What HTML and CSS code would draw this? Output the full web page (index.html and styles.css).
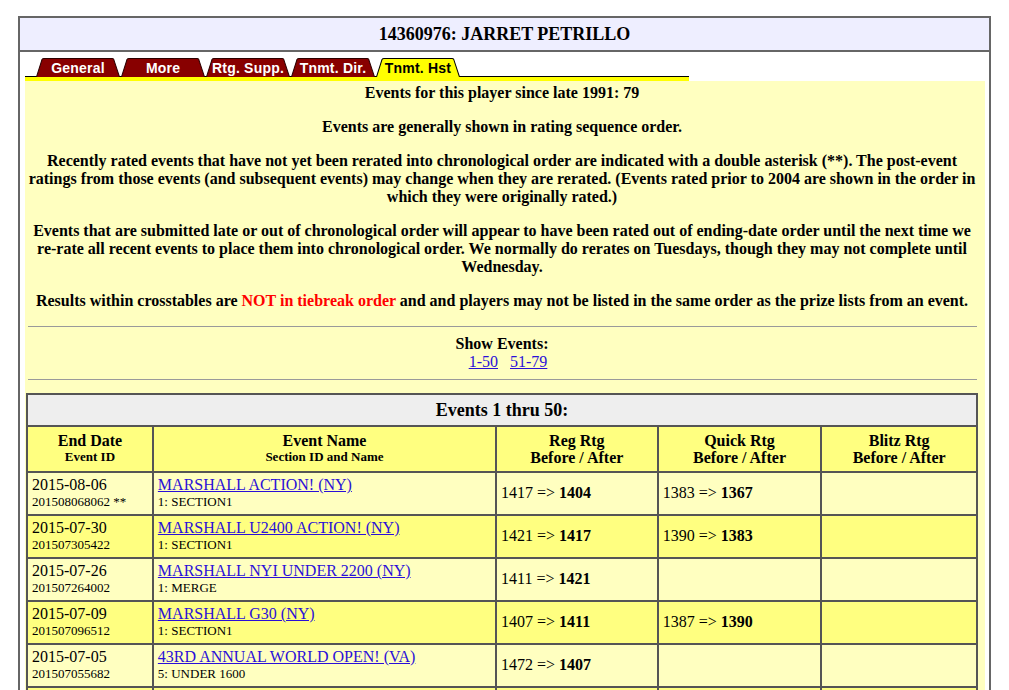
FILE: index.html
```html
<!DOCTYPE html>
<html>
<head>
<meta charset="utf-8">
<title>14360976: JARRET PETRILLO</title>
<link rel="stylesheet" href="styles.css">
</head>
<body>
<div class="page">
  <div class="title">14360976: JARRET PETRILLO</div>
  <div class="main">
    <div class="tabstrip">
      <div class="tabs">
        <a class="tab" href="#"><svg class="tab-bg" viewBox="0 0 84 18" preserveAspectRatio="none"><path d="M0.5 18 L6 1.5 Q6.6 0.5 8 0.5 L76 0.5 Q77.3 0.5 77.8 1.5 L83.5 18" /></svg><span>General</span></a>
        <a class="tab" href="#"><svg class="tab-bg" viewBox="0 0 84 18" preserveAspectRatio="none"><path d="M0.5 18 L6 1.5 Q6.6 0.5 8 0.5 L76 0.5 Q77.3 0.5 77.8 1.5 L83.5 18" /></svg><span>More</span></a>
        <a class="tab" href="#"><svg class="tab-bg" viewBox="0 0 84 18" preserveAspectRatio="none"><path d="M0.5 18 L6 1.5 Q6.6 0.5 8 0.5 L76 0.5 Q77.3 0.5 77.8 1.5 L83.5 18" /></svg><span>Rtg. Supp.</span></a>
        <a class="tab" href="#"><svg class="tab-bg" viewBox="0 0 84 18" preserveAspectRatio="none"><path d="M0.5 18 L6 1.5 Q6.6 0.5 8 0.5 L76 0.5 Q77.3 0.5 77.8 1.5 L83.5 18" /></svg><span>Tnmt. Dir.</span></a>
        <a class="tab active" href="#"><svg class="tab-bg" viewBox="0 0 84 18" preserveAspectRatio="none"><path d="M0.5 18 L6 1.5 Q6.6 0.5 8 0.5 L76 0.5 Q77.3 0.5 77.8 1.5 L83.5 18" /></svg><span>Tnmt. Hst</span></a>
      </div>
    </div>
    <div class="panel">
      <p>Events for this player since late 1991: 79</p>
      <p>Events are generally shown in rating sequence order.</p>
      <p>Recently rated events that have not yet been rerated into chronological order are indicated with a double asterisk (**). The post-event ratings from those events (and subsequent events) may change when they are rerated. (Events rated prior to 2004 are shown in the order in which they were originally rated.)</p>
      <p>Events that are submitted late or out of chronological order will appear to have been rated out of ending-date order until the next time we re-rate all recent events to place them into chronological order. We normally do rerates on Tuesdays, though they may not complete until Wednesday.</p>
      <p>Results within crosstables are <span class="red">NOT in tiebreak order</span> and and players may not be listed in the same order as the prize lists from an event.</p>
      <div class="rule"></div>
      <div class="show">
        <div class="show-label">Show Events:</div>
        <div class="pages">&nbsp;&nbsp;&nbsp;<a href="#">1-50</a>&nbsp;&nbsp; <a href="#">51-79</a></div>
      </div>
      <div class="rule"></div>
      <table class="events">
        <tr><td class="caption" colspan="5">Events 1 thru 50:</td></tr>
        <tr class="head">
          <td class="c1">End Date<span class="sub">Event ID</span></td>
          <td class="c2">Event Name<span class="sub">Section ID and Name</span></td>
          <td class="c3">Reg Rtg<br>Before / After</td>
          <td class="c4">Quick Rtg<br>Before / After</td>
          <td class="c5">Blitz Rtg<br>Before / After</td>
        </tr>
        <tr class="light">
          <td>2015-08-06<span class="small">201508068062 **</span></td>
          <td><a href="#">MARSHALL ACTION! (NY)</a><span class="small">1: SECTION1</span></td>
          <td>1417 =&gt; <b>1404</b></td>
          <td>1383 =&gt; <b>1367</b></td>
          <td></td>
        </tr>
        <tr class="bright">
          <td>2015-07-30<span class="small">201507305422</span></td>
          <td><a href="#">MARSHALL U2400 ACTION! (NY)</a><span class="small">1: SECTION1</span></td>
          <td>1421 =&gt; <b>1417</b></td>
          <td>1390 =&gt; <b>1383</b></td>
          <td></td>
        </tr>
        <tr class="light">
          <td>2015-07-26<span class="small">201507264002</span></td>
          <td><a href="#">MARSHALL NYI UNDER 2200 (NY)</a><span class="small">1: MERGE</span></td>
          <td>1411 =&gt; <b>1421</b></td>
          <td></td>
          <td></td>
        </tr>
        <tr class="bright">
          <td>2015-07-09<span class="small">201507096512</span></td>
          <td><a href="#">MARSHALL G30 (NY)</a><span class="small">1: SECTION1</span></td>
          <td>1407 =&gt; <b>1411</b></td>
          <td>1387 =&gt; <b>1390</b></td>
          <td></td>
        </tr>
        <tr class="light">
          <td>2015-07-05<span class="small">201507055682</span></td>
          <td><a href="#">43RD ANNUAL WORLD OPEN! (VA)</a><span class="small">5: UNDER 1600</span></td>
          <td>1472 =&gt; <b>1407</b></td>
          <td></td>
          <td></td>
        </tr>
        <tr class="bright">
          <td>&nbsp;<span class="small">&nbsp;</span></td>
          <td></td>
          <td></td>
          <td></td>
          <td></td>
        </tr>
      </table>
    </div>
  </div>
</div>
</body>
</html>
```

FILE: styles.css
```css
html, body {
  margin: 0;
  padding: 0;
  background: #ffffff;
}
body {
  font-family: "Liberation Serif", "Times New Roman", serif;
  color: #000;
}
.page {
  margin: 16px 0 0 18px;
  width: 973px;
  box-sizing: border-box;
  border: 2px solid #666;
  border-bottom: none;
}
.title {
  background: #eeeeff;
  text-align: center;
  font-weight: bold;
  font-size: 18px;
  line-height: 22px;
  padding: 5px 0 5px;
  border-bottom: 2px solid #666;
}
.main {
  padding: 0 4px 0 5px;
}
.tabstrip {
  width: 664px;
  margin-top: 6px;
  border-bottom: 4px solid #ffff00;
}
.tabs {
  display: flex;
  gap: 1px;
  padding-left: 11px;
  border-bottom: 1px solid #000;
  height: 18px;
}
.tab {
  position: relative;
  width: 84px;
  height: 18px;
  display: flex;
  align-items: center;
  justify-content: center;
  text-decoration: none;
  font-family: "Liberation Sans", Arial, sans-serif;
  font-weight: bold;
  font-size: 14px;
  color: #fff;
  letter-spacing: 0.2px;
}
.tab span {
  position: relative;
  padding-top: 1px;
}
.tab-bg {
  position: absolute;
  left: 0;
  top: 0;
  width: 84px;
  height: 19px;
}
.tab-bg path {
  fill: #880000;
  stroke: #2a0000;
  stroke-width: 1;
}
.tab.active {
  color: #000;
}
.tab.active .tab-bg path {
  fill: #ffff00;
  stroke: #000;
}
.panel {
  background: #ffffc0;
  padding: 3px 7px 0 1px;
  text-align: center;
  font-size: 16px;
  line-height: 18px;
}
.panel p {
  margin: 0 0 16px;
  font-weight: bold;
}
.red {
  color: #ff0000;
}
.rule {
  height: 0;
  border-top: 1px solid #9a9a9a;
  margin: 0 1px 0 2px;
}
.show {
  margin: 8px 0;
}
.show-label {
  font-weight: bold;
}
a {
  color: #2a10d8;
}
.events {
  margin-top: 13px;
  width: 952px;
  border-collapse: separate;
  border-spacing: 0;
  border: 1px solid #555;
  text-align: left;
}
.events td {
  border: 1px solid #555;
  padding: 3px 4px 5px;
  vertical-align: middle;
  line-height: 18px;
}
.events td.caption {
  background: #eeeeee;
  text-align: center;
  font-weight: bold;
  font-size: 18px;
  line-height: 20px;
  padding: 5px 4px;
}
.events tr.head td {
  background: #ffff80;
  text-align: center;
  font-weight: bold;
  line-height: 17px;
  padding: 5px 4px;
}
.events tr.head td.c1,
.events tr.head td.c2 {
  padding: 4px 4px 6px;
}
.sub,
.small {
  display: block;
  font-size: 13px;
  line-height: 15px;
}
.events .c1 { width: 116px; }
.events .c2 { width: 334px; }
.events .c3 { width: 152px; }
.events .c4 { width: 154px; }
.events .c5 { width: 146px; }
tr.light td {
  background: #ffffc0;
}
tr.bright td {
  background: #ffff80;
}
```
